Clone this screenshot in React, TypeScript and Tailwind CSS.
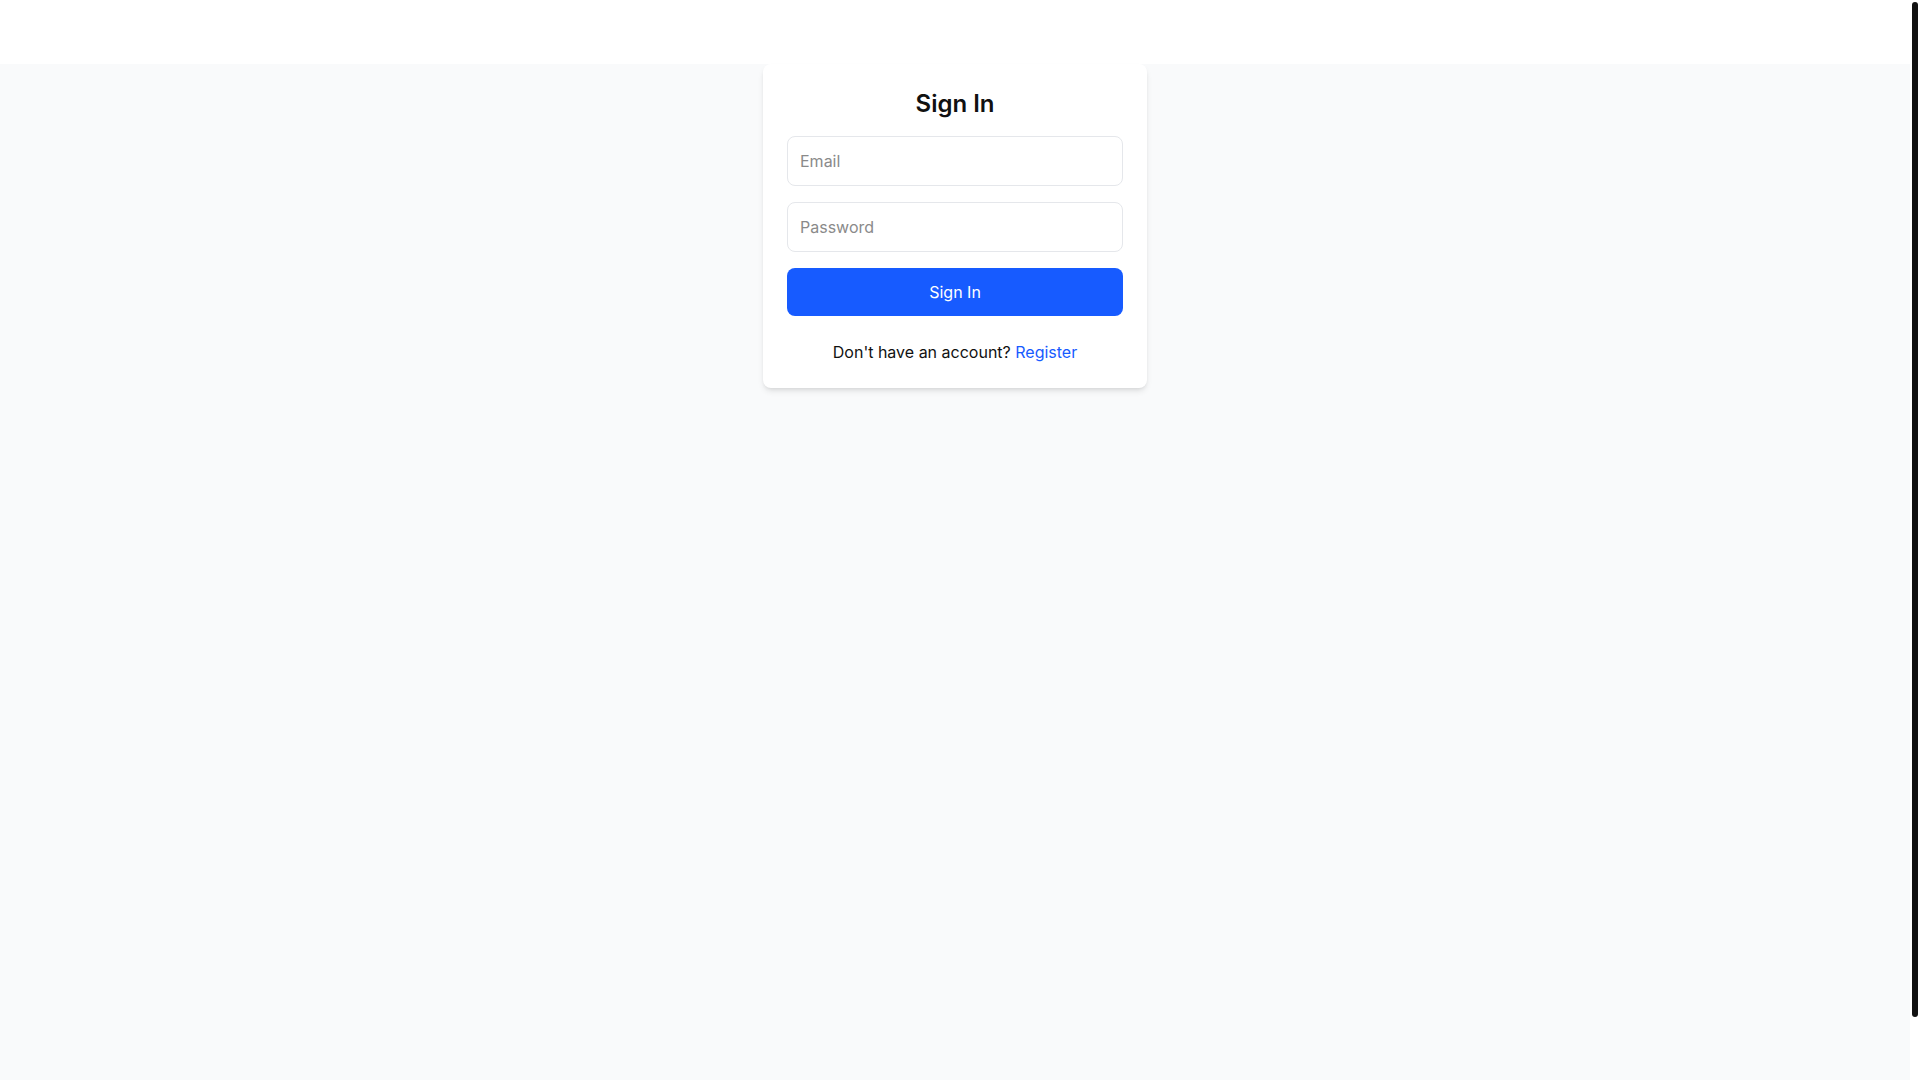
const App = () => {
  return (
    <div className="h-screen flex overflow-hidden bg-white font-['Inter','Liberation_Sans',sans-serif] text-[#111]">
      <div className="flex-1 min-w-0 flex flex-col">
        <header className="h-16 shrink-0 bg-white"></header>
        <main className="flex-1 bg-[#f9fafb] flex justify-center items-start">
          <div className="w-96 bg-white rounded-lg shadow-md p-6">
            <h1 className="text-2xl font-semibold text-center mb-4">Sign In</h1>
            <form className="flex flex-col" onSubmit={(e) => e.preventDefault()}>
              <input
                type="email"
                placeholder="Email"
                className="w-full mb-4 px-3 py-3 text-base border border-[#e5e7eb] rounded-lg outline-none placeholder:text-[#8a8a8a]"
              />
              <input
                type="password"
                placeholder="Password"
                className="w-full mb-4 px-3 py-3 text-base border border-[#e5e7eb] rounded-lg outline-none placeholder:text-[#8a8a8a]"
              />
              <button
                type="submit"
                className="w-full py-3 text-base text-white bg-[#175bff] rounded-lg"
              >
                Sign In
              </button>
            </form>
            <p className="mt-6 text-center text-base">
              Don't have an account?{" "}
              <a href="#" className="text-[#175bff]">
                Register
              </a>
            </p>
          </div>
        </main>
      </div>
      {/* scrollbar */}
      <div className="w-[10px] shrink-0 bg-white px-[2px] pt-[2px]">
        <div className="h-[1015px] rounded-full bg-[#111]"></div>
      </div>
    </div>
  );
};

export default App;
